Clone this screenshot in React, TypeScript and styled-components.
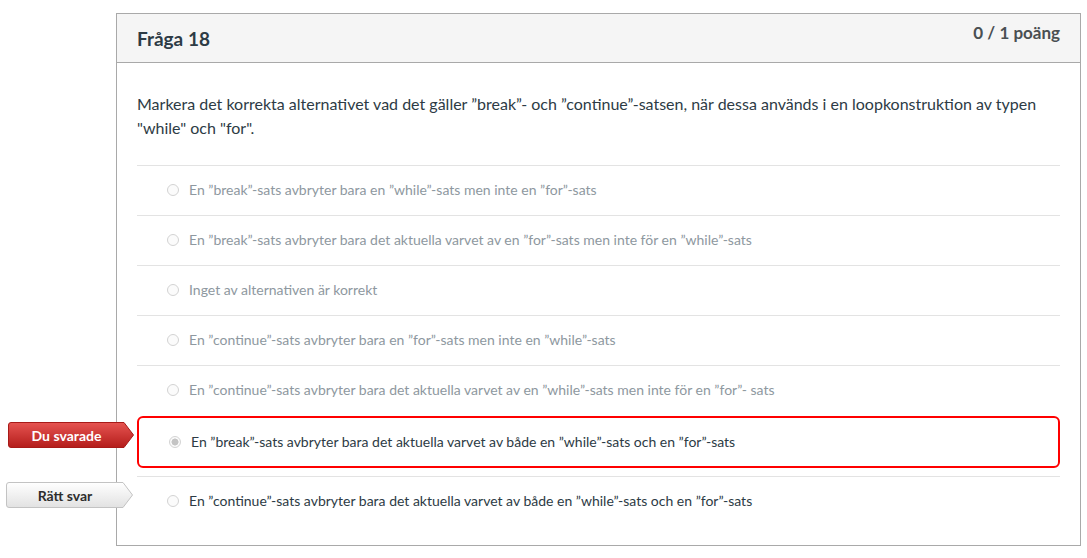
import React from "react";
import styled, { createGlobalStyle } from "styled-components";

const GlobalStyle = createGlobalStyle`
  html, body { margin: 0; padding: 0; background: #ffffff; }
  body { font-family: Lato, "Open Sans", "Liberation Sans", sans-serif; }
  * { box-sizing: border-box; }
`;

const Page = styled.div`
  padding: 13px 0 0 116px;
`;

const QuestionBox = styled.section`
  width: 965px;
  height: 533px;
  border: 1px solid #a9a9a9;
  background: #fff;
`;

const Header = styled.header`
  height: 49px;
  display: flex;
  justify-content: space-between;
  align-items: flex-start;
  padding: 0 20px;
  background: #f5f5f5;
  border-bottom: 1px solid #a9a9a9;
`;

const Title = styled.h2`
  margin: 14px 0 0;
  font-size: 19px;
  line-height: 22px;
  font-weight: 700;
  color: #2d3b45;
`;

const Points = styled.span`
  margin-top: 9px;
  font-size: 17px;
  line-height: 20px;
  font-weight: 700;
  color: #4a4f52;
`;

const Content = styled.div`
  padding: 29px 20px 0;
`;

const QuestionText = styled.p`
  margin: 0;
  font-size: 16px;
  line-height: 24px;
  color: #2d3b45;
`;

const AnswerList = styled.div`
  margin-top: 25px;
  display: flex;
  flex-direction: column;
`;

type Variant = "plain" | "wrong" | "correct";

const AnswerRow = styled.div<{ $variant: Variant }>`
  position: relative;
  display: flex;
  align-items: center;
  padding-left: 30px;
  padding-bottom: 1px;
  ${(p) =>
    p.$variant === "wrong"
      ? `
    height: 52px;
    margin: 1px 0 8px;
    border: 2px solid #ff0000;
    border-radius: 6px;
  `
      : `
    height: 50px;
    border-top: 1px solid #e3e3e3;
  `}
`;

const Radio = styled.span<{ $checked?: boolean }>`
  flex: none;
  width: 12px;
  height: 12px;
  margin-right: 10px;
  border-radius: 50%;
  border: 1px solid #d3d3d3;
  background: ${(p) =>
    p.$checked
      ? "radial-gradient(circle, #c4c4c4 0 3.2px, #fafafa 3.8px)"
      : "#fbfbfb"};
`;

const AnswerText = styled.span<{ $dim: boolean }>`
  font-size: 14px;
  line-height: 18px;
  color: ${(p) => (p.$dim ? "#8e98a0" : "#2d3b45")};
`;

const Tag = styled.div<{ $left: number; $width: number; $light?: boolean }>`
  position: absolute;
  top: ${(p) => (p.$light ? 5 : 4)}px;
  left: ${(p) => p.$left}px;
  width: ${(p) => p.$width}px;
  height: 26px;
  display: flex;
  align-items: center;
  justify-content: center;
  padding-right: 9px;
  font-size: 14px;
  font-weight: 700;
  color: ${(p) => (p.$light ? "#2d2d2d" : "#ffffff")};
`;

const TagShape = styled.svg`
  position: absolute;
  inset: 0;
  width: 100%;
  height: 100%;
  overflow: visible;
`;

const TagLabel = styled.span`
  position: relative;
`;

function TagBadge({
  text,
  left,
  width,
  light,
}: {
  text: string;
  left: number;
  width: number;
  light?: boolean;
}) {
  const id = light ? "tagLight" : "tagRed";
  const w = width;
  const d = `M3,0.5 H${w - 10} L${w - 0.5},13 L${w - 10},25.5 H3 Q0.5,25.5 0.5,23 V3 Q0.5,0.5 3,0.5 Z`;
  return (
    <Tag $left={left} $width={width} $light={light}>
      <TagShape viewBox={`0 0 ${w} 26`} preserveAspectRatio="none">
        <defs>
          <linearGradient id={id} x1="0" y1="0" x2="0" y2="1">
            {light ? (
              <>
                <stop offset="0" stopColor="#ffffff" />
                <stop offset="1" stopColor="#e2e2e2" />
              </>
            ) : (
              <>
                <stop offset="0" stopColor="#e65451" />
                <stop offset="1" stopColor="#b41d1b" />
              </>
            )}
          </linearGradient>
        </defs>
        <path
          d={d}
          fill={`url(#${id})`}
          stroke={light ? "#c3c3c3" : "#a81a18"}
          strokeWidth="1"
        />
      </TagShape>
      <TagLabel>{text}</TagLabel>
    </Tag>
  );
}

const answers: { text: string; variant: Variant }[] = [
  { text: "En ”break”-sats avbryter bara en ”while”-sats men inte en ”for”-sats", variant: "plain" },
  { text: "En ”break”-sats avbryter bara det aktuella varvet av en ”for”-sats men inte för en ”while”-sats", variant: "plain" },
  { text: "Inget av alternativen är korrekt", variant: "plain" },
  { text: "En ”continue”-sats avbryter bara en ”for”-sats men inte en ”while”-sats", variant: "plain" },
  { text: "En ”continue”-sats avbryter bara det aktuella varvet av en ”while”-sats men inte för en ”for”- sats", variant: "plain" },
  { text: "En ”break”-sats avbryter bara det aktuella varvet av både en ”while”-sats och en ”for”-sats", variant: "wrong" },
  { text: "En ”continue”-sats avbryter bara det aktuella varvet av både en ”while”-sats och en ”for”-sats", variant: "correct" },
];

export default function App() {
  return (
    <>
      <GlobalStyle />
      <Page>
        <QuestionBox>
          <Header>
            <Title>Fråga 18</Title>
            <Points>0 / 1 poäng</Points>
          </Header>
          <Content>
            <QuestionText>
              Markera det korrekta alternativet vad det gäller ”break”- och ”continue”-satsen, när dessa används i en loopkonstruktion av typen "while" och "for".
            </QuestionText>
            <AnswerList>
              {answers.map((a, i) => (
                <AnswerRow key={i} $variant={a.variant}>
                  {a.variant === "wrong" && <TagBadge text="Du svarade" left={-131} width={126} />}
                  {a.variant === "correct" && <TagBadge text="Rätt svar" left={-131} width={127} light />}
                  <Radio $checked={a.variant === "wrong"} />
                  <AnswerText $dim={a.variant === "plain"}>{a.text}</AnswerText>
                </AnswerRow>
              ))}
            </AnswerList>
          </Content>
        </QuestionBox>
      </Page>
    </>
  );
}
